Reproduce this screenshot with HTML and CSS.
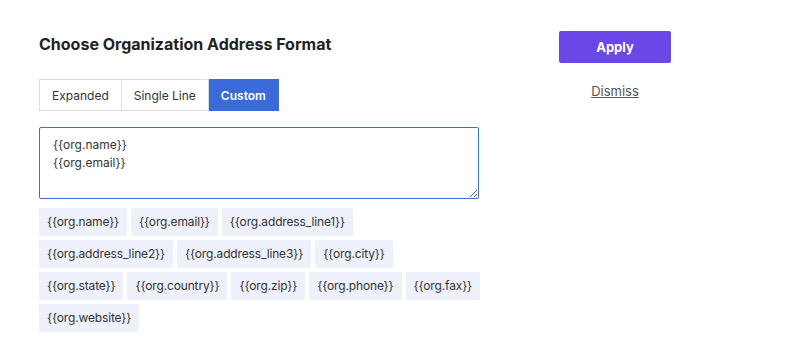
FILE: index.html
```html
<!DOCTYPE html>
<html lang="en">
<head>
  <meta charset="UTF-8">
  <title>Organization Address Format</title>
  <link rel="stylesheet" href="styles.css">
</head>
<body>
  <div class="panel">
    <div class="main">
      <h2 class="title">Choose Organization Address Format</h2>
      <div class="segmented">
        <button class="seg">Expanded</button>
        <button class="seg">Single Line</button>
        <button class="seg active">Custom</button>
      </div>
      <textarea class="format">{{org.name}}
{{org.email}}</textarea>
      <div class="chips">
        <div class="chip-row">
          <span class="chip">{{org.name}}</span>
          <span class="chip">{{org.email}}</span>
          <span class="chip">{{org.address_line1}}</span>
        </div>
        <div class="chip-row">
          <span class="chip">{{org.address_line2}}</span>
          <span class="chip">{{org.address_line3}}</span>
          <span class="chip">{{org.city}}</span>
        </div>
        <div class="chip-row">
          <span class="chip">{{org.state}}</span>
          <span class="chip">{{org.country}}</span>
          <span class="chip">{{org.zip}}</span>
          <span class="chip">{{org.phone}}</span>
          <span class="chip">{{org.fax}}</span>
        </div>
        <div class="chip-row">
          <span class="chip">{{org.website}}</span>
        </div>
      </div>
    </div>
    <div class="actions">
      <button class="apply">Apply</button>
      <a class="dismiss" href="#">Dismiss</a>
    </div>
  </div>
</body>
</html>
```

FILE: styles.css
```css
body {
  margin: 0;
  font-family: Inter, 'Noto Sans', sans-serif;
  color: #222;
  background: #fff;
}
.panel {
  display: flex;
  padding: 31px 0 0 39px;
}
.main {
  width: 440px;
}
.title {
  font-size: 16px;
  font-weight: 700;
  margin: 3px 0 0;
  line-height: 20px;
  color: #222;
}
.segmented {
  display: flex;
  margin-top: 25px;
}
.seg {
  font-family: inherit;
  font-size: 12px;
  color: #333;
  background: #fff;
  border: 1px solid #ddd;
  border-left: none;
  height: 32px;
  padding: 0 12px;
  cursor: pointer;
}
.seg:first-child {
  border-left: 1px solid #ddd;
}
.seg.active {
  background: #3a6bd9;
  border-color: #3a6bd9;
  color: #fff;
  font-weight: 600;
}
.format {
  display: block;
  box-sizing: border-box;
  width: 440px;
  height: 72px;
  margin-top: 16px;
  padding: 8px 13px;
  border: 1px solid #3a6bd9;
  border-radius: 2px;
  font-family: inherit;
  font-size: 12px;
  line-height: 18px;
  color: #333;
  outline: none;
}
.chips {
  display: flex;
  flex-direction: column;
  gap: 4px;
  margin-top: 9px;
}
.chip-row {
  display: flex;
  gap: 4px;
}
.chip {
  background: #eef0fb;
  border-radius: 2px;
  font-size: 12px;
  letter-spacing: -0.15px;
  line-height: 28px;
  padding: 0 8px;
  color: #333;
  white-space: nowrap;
}
.actions {
  display: flex;
  flex-direction: column;
  align-items: center;
  margin-left: 80px;
  width: 112px;
}
.apply {
  width: 112px;
  height: 32px;
  background: #6a48e8;
  color: #fff;
  border: none;
  border-radius: 2px;
  font-family: inherit;
  font-size: 13px;
  font-weight: 700;
  cursor: pointer;
}
.dismiss {
  margin-top: 20px;
  font-size: 13px;
  color: #555;
  text-decoration: underline;
}
```
